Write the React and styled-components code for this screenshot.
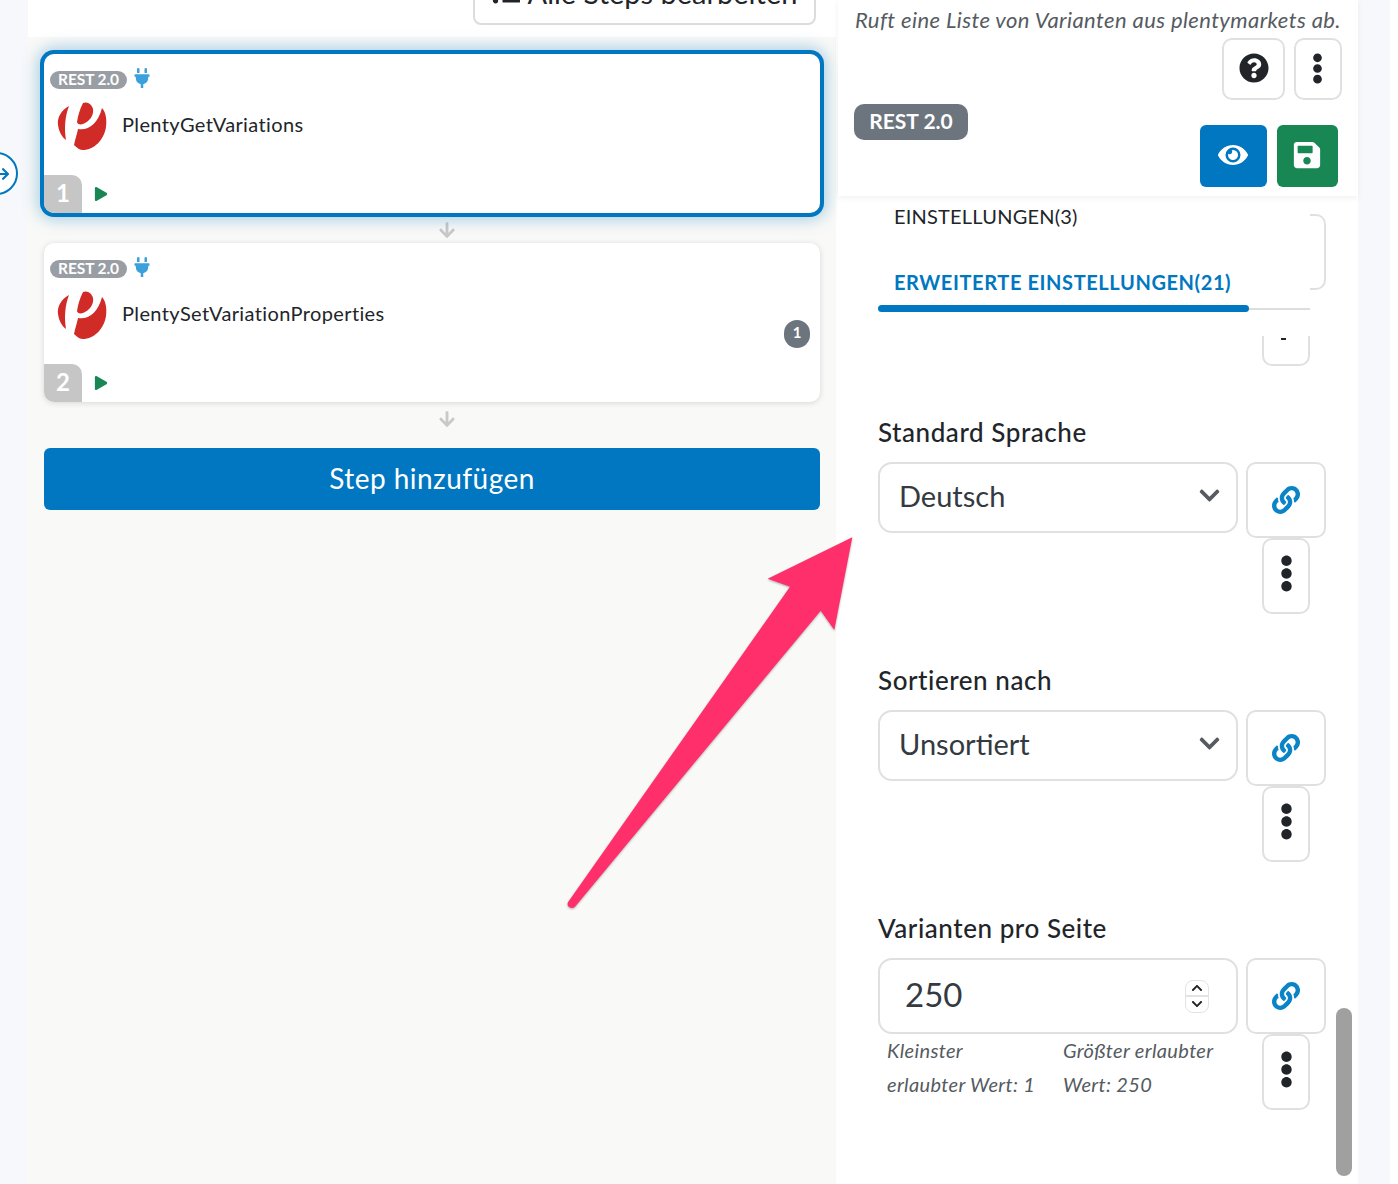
import React from "react";
import styled, { createGlobalStyle } from "styled-components";
import {
  FaArrowDown,
  FaArrowRight,
  FaChevronDown,
  FaChevronUp,
  FaEllipsisV,
  FaEye,
  FaLink,
  FaPlay,
  FaPlug,
  FaQuestionCircle,
  FaSave,
  FaTasks,
} from "react-icons/fa";

const GlobalStyle = createGlobalStyle`
  html, body {
    margin: 0;
    padding: 0;
    background: #fff;
  }
  * {
    box-sizing: border-box;
  }
`;

const Page = styled.div`
  position: relative;
  display: grid;
  grid-template-columns: 28px 810px 520px 32px 8px;
  width: 1398px;
  height: 1184px;
  overflow: hidden;
  font-family: "Lato", "Open Sans", sans-serif;
  color: #212529;
  background: #fff;
`;

const Strip = styled.div`
  background: #f6f8fb;
`;

const ToggleCircle = styled.div`
  position: absolute;
  left: -25px;
  top: 152px;
  width: 43px;
  height: 43px;
  display: flex;
  align-items: center;
  justify-content: center;
  border: 2px solid #0077c0;
  border-radius: 50%;
  background: #fff;
  color: #0077c0;
  font-size: 14px;
  padding-left: 12px;
`;

const LeftPanel = styled.main`
  background: #f9f9f7;
  border-right: 2px solid #fff;
`;

const TopBar = styled.div`
  height: 37px;
  overflow: hidden;
  background: #fff;
  display: flex;
  justify-content: flex-end;
  align-items: flex-end;
  padding: 0 20px 12px 0;
`;

const EditAllButton = styled.div`
  flex: none;
  width: 343px;
  height: 50px;
  border: 2px solid #dcdcdc;
  border-radius: 8px;
  background: #fff;
  display: flex;
  align-items: center;
  justify-content: center;
  gap: 8px;
  padding-bottom: 16px;
  font-size: 29px;
  color: #212529;
  white-space: nowrap;
`;

const Flow = styled.div`
  padding: 17px 16px 0;
`;

const Card = styled.div`
  position: relative;
  height: 159px;
  background: #fff;
  border-radius: 10px;
  display: flex;
  flex-direction: column;
  box-shadow: ${(p) =>
    p.$selected
      ? "0 0 0 4px #0077c0, 0 0 16px 6px rgba(0, 119, 192, 0.35)"
      : "0 1px 6px rgba(0, 0, 0, 0.14)"};
`;

const CardTop = styled.div`
  display: flex;
  align-items: center;
  gap: 5px;
  height: 20px;
  margin: 14px 0 0 6px;
  color: #3ba0db;
  font-size: 20px;
`;

const SmallBadge = styled.span`
  display: inline-block;
  width: 77px;
  height: 18px;
  margin-top: 3px;
  border-radius: 9px;
  background: #999ea5;
  color: #fff;
  font-size: 15.5px;
  font-weight: 700;
  line-height: 17px;
  letter-spacing: -0.1px;
  text-align: center;
  white-space: nowrap;
`;

const CardBody = styled.div`
  display: flex;
  gap: 8px;
  margin: 10px 0 0 6px;
`;

const CardTitle = styled.div`
  margin-top: 12px;
  font-size: 20px;
  line-height: 28px;
  letter-spacing: 0.38px;
`;

const CardFoot = styled.div`
  margin-top: auto;
  display: flex;
  align-items: center;
  gap: 12px;
  color: #198754;
  font-size: 14px;
`;

const StepNumber = styled.div`
  width: 38px;
  height: 38px;
  display: flex;
  align-items: center;
  justify-content: center;
  padding-bottom: 3px;
  background: #c6c6c6;
  border-radius: 0 10px 0 10px;
  color: #fff;
  font-size: 24px;
  font-weight: 700;
`;

const PlayMark = styled.span`
  display: flex;
  margin-top: -1px;
`;

const CountBadge = styled.span`
  position: absolute;
  right: 10px;
  top: 77px;
  width: 26px;
  height: 28px;
  border-radius: 13px;
  background: #6c757d;
  color: #fff;
  font-size: 15px;
  font-weight: 700;
  line-height: 25px;
  text-align: center;
`;

const Connector = styled.div`
  height: ${(p) => p.$height}px;
  padding: 8px 0 0 394px;
  color: #c9c9c9;
  font-size: 18px;
  line-height: 18px;
`;

const AddStep = styled.div`
  height: 62px;
  border-radius: 6px;
  background: #0077c0;
  color: #fff;
  font-size: 28px;
  line-height: 60px;
  letter-spacing: 0.47px;
  text-align: center;
`;

const RightPanel = styled.aside`
  position: relative;
  background: #fff;
`;

const Header = styled.header`
  height: 196px;
  padding: 6px 20px 0 16px;
  box-shadow: 0 2px 6px rgba(0, 0, 0, 0.06);
`;

const Description = styled.div`
  font-size: 22px;
  font-style: italic;
  line-height: 28px;
  letter-spacing: 0.4px;
  color: #555b61;
  white-space: nowrap;
  padding-left: 1px;
`;

const HelpRow = styled.div`
  display: flex;
  justify-content: flex-end;
  gap: 9px;
  margin: 4px -4px 0 0;
`;

const OutlineButton = styled.div`
  flex: none;
  width: ${(p) => p.$w}px;
  height: ${(p) => p.$h}px;
  display: flex;
  align-items: center;
  justify-content: center;
  padding: 0 ${(p) => p.$nudge || 0}px ${(p) => p.$lift || 0}px 0;
  border: 2px solid #e0e0e0;
  border-radius: 10px;
  background: #fff;
  color: ${(p) => p.$color || "#212529"};
  font-size: ${(p) => p.$size || 28}px;
`;

const ActionRow = styled.div`
  display: flex;
  justify-content: space-between;
  align-items: flex-start;
  margin-top: 4px;
`;

const LargeBadge = styled.span`
  width: 114px;
  height: 36px;
  border-radius: 10px;
  background: #6c757d;
  color: #fff;
  font-size: 21px;
  font-weight: 700;
  line-height: 34px;
  text-align: center;
`;

const Actions = styled.div`
  display: flex;
  gap: 10px;
  margin-top: 21px;
`;

const ActionButton = styled.div`
  width: ${(p) => p.$w}px;
  height: 62px;
  display: flex;
  align-items: center;
  justify-content: center;
  padding: 0 2px 3px 0;
  border-radius: 6px;
  background: ${(p) => p.$bg};
  color: #fff;
  font-size: 30px;
`;

const Body = styled.div`
  padding-left: 40px;
`;

const TabsRow = styled.div`
  display: flex;
`;

const TabList = styled.div`
  width: 432px;
  padding-top: 8px;
`;

const Tab = styled.div`
  margin-top: ${(p) => p.$top}px;
  padding-left: 16px;
  font-size: 20px;
  line-height: 24px;
  letter-spacing: ${(p) => (p.$active ? "0.6px" : "0.2px")};
  font-weight: ${(p) => (p.$active ? 700 : 400)};
  color: ${(p) => (p.$active ? "#0077c0" : "#212529")};
  white-space: nowrap;
`;

const Track = styled.div`
  height: 7px;
  margin-top: 11px;
  background: linear-gradient(#dddddd, #dddddd) center / 100% 2px no-repeat;
`;

const Indicator = styled.div`
  width: 371px;
  height: 7px;
  border-radius: 4px;
  background: #0077c0;
`;

const Bracket = styled.div`
  width: 16px;
  height: 76px;
  margin-top: 18px;
  border: 2px solid #e0e0e0;
  border-left: 0;
  border-radius: 0 10px 10px 0;
`;

const ClippedButton = styled.div`
  width: 48px;
  height: 30px;
  margin: 24px 0 0 384px;
  border: 2px solid #e0e0e0;
  border-top: 0;
  border-radius: 0 0 10px 10px;
  display: flex;
  justify-content: center;
`;

const ClippedDot = styled.span`
  width: 5px;
  height: 2px;
  margin: 2px 6px 0 0;
  background: #212529;
`;

const Field = styled.section`
  margin-top: 49px;
`;

const FieldLabel = styled.div`
  font-size: 26px;
  font-weight: 500;
  line-height: 34px;
  letter-spacing: 0.55px;
  margin-bottom: 13px;
`;

const FieldRow = styled.div`
  display: flex;
  align-items: flex-start;
  gap: 8px;
`;

const Control = styled.div`
  width: 360px;
`;

const Box = styled.div`
  height: ${(p) => p.$h}px;
  display: flex;
  align-items: center;
  justify-content: space-between;
  padding: ${(p) => p.$pad};
  border: 2px solid #e0e0e0;
  border-radius: 14px;
  background: #fff;
  font-size: ${(p) => p.$size}px;
  color: #343a40;
`;

const Chevron = styled.span`
  display: flex;
  color: #555b61;
  font-size: 23px;
  stroke: currentColor;
  stroke-width: 36px;
`;

const Spinner = styled.div`
  width: 24px;
  height: 33px;
  margin-top: 4px;
  display: flex;
  flex-direction: column;
  border: 1px solid #e3e3e3;
  border-radius: 8px;
  font-size: 12px;
  color: #212529;
  stroke: currentColor;
  stroke-width: 30px;
`;

const SpinPart = styled.span`
  flex: 1;
  display: flex;
  align-items: center;
  justify-content: center;
  border-top: ${(p) => (p.$lower ? "2px solid #e3e3e3" : "0")};
`;

const Side = styled.div`
  width: 80px;
  display: flex;
  flex-direction: column;
  align-items: center;
`;

const Hints = styled.div`
  display: grid;
  grid-template-columns: 176px 176px;
  padding-left: 9px;
  margin-top: -1px;
`;

const Hint = styled.div`
  font-size: 20px;
  font-style: italic;
  line-height: 34px;
  letter-spacing: 0.35px;
  color: #555b61;
  white-space: nowrap;
`;

const Scrollbar = styled.div`
  position: absolute;
  right: 6px;
  top: 1008px;
  width: 16px;
  height: 168px;
  border-radius: 8px;
  background: #a0a0a0;
`;

const PinkArrow = styled.svg`
  position: absolute;
  left: 560px;
  top: 530px;
  overflow: visible;
  filter: drop-shadow(0 1px 1px rgba(0, 0, 0, 0.3));
`;

const PlentyLogo = () => (
  <svg width="64" height="58" viewBox="0 0 64 58" style={{ flex: "none" }}>
    <g fill="#d12b27">
      <path d="M19 8C11 12 7 20 8 27C9 34 12 39 16 42C14 31 15 18 19 8Z" />
      <path d="M33 5C38 3 42 7 43 11C44 17 40 23 33 26C30 27 27 26 27 24C28 17 30 11 33 5Z" />
      <path d="M28 31C38 33 48 26 52 10C56 14 57 22 56 29C54 42 44 52 33 52C30 52 27 50 24 47C25 42 27 36 28 31Z" />
    </g>
  </svg>
);

const Step = ({ number, title, count, selected }) => (
  <Card $selected={selected}>
    <CardTop>
      <SmallBadge>REST 2.0</SmallBadge>
      <FaPlug />
    </CardTop>
    <CardBody>
      <PlentyLogo />
      <CardTitle>{title}</CardTitle>
    </CardBody>
    <CardFoot>
      <StepNumber>{number}</StepNumber>
      <PlayMark>
        <FaPlay />
      </PlayMark>
    </CardFoot>
    {count && <CountBadge>{count}</CountBadge>}
  </Card>
);

const SideButtons = () => (
  <Side>
    <OutlineButton $w={80} $h={76} $color="#0a84c6" $size={28}>
      <FaLink />
    </OutlineButton>
    <OutlineButton $w={48} $h={76} $size={37} $lift={6}>
      <FaEllipsisV />
    </OutlineButton>
  </Side>
);

const SelectField = ({ label, value }) => (
  <Field>
    <FieldLabel>{label}</FieldLabel>
    <FieldRow>
      <Control>
        <Box $h={71} $pad="0 15px 4px 19px" $size={29}>
          {value}
          <Chevron>
            <FaChevronDown />
          </Chevron>
        </Box>
      </Control>
      <SideButtons />
    </FieldRow>
  </Field>
);

export default function App() {
  return (
    <>
      <GlobalStyle />
      <Page>
        <Strip />
        <LeftPanel>
          <TopBar>
            <EditAllButton>
              <FaTasks size={28} />
              Alle Steps bearbeiten
            </EditAllButton>
          </TopBar>
          <Flow>
            <Step number="1" title="PlentyGetVariations" selected />
            <Connector $height={30}>
              <FaArrowDown />
            </Connector>
            <Step number="2" title="PlentySetVariationProperties" count="1" />
            <Connector $height={46}>
              <FaArrowDown />
            </Connector>
            <AddStep>Step hinzufügen</AddStep>
          </Flow>
        </LeftPanel>
        <RightPanel>
          <Header>
            <Description>Ruft eine Liste von Varianten aus plentymarkets ab.</Description>
            <HelpRow>
              <OutlineButton $w={63} $h={62} $size={30} $lift={3}>
                <FaQuestionCircle />
              </OutlineButton>
              <OutlineButton $w={48} $h={62} $size={31} $lift={1} $nudge={2}>
                <FaEllipsisV />
              </OutlineButton>
            </HelpRow>
            <ActionRow>
              <LargeBadge>REST 2.0</LargeBadge>
              <Actions>
                <ActionButton $w={67} $bg="#0077c0">
                  <FaEye />
                </ActionButton>
                <ActionButton $w={61} $bg="#198754">
                  <FaSave />
                </ActionButton>
              </Actions>
            </ActionRow>
          </Header>
          <Body>
            <TabsRow>
              <TabList>
                <Tab $top={0}>EINSTELLUNGEN(3)</Tab>
                <Tab $top={42} $active>
                  ERWEITERTE EINSTELLUNGEN(21)
                </Tab>
                <Track>
                  <Indicator />
                </Track>
              </TabList>
              <Bracket />
            </TabsRow>
            <ClippedButton>
              <ClippedDot />
            </ClippedButton>
            <SelectField label="Standard Sprache" value="Deutsch" />
            <SelectField label="Sortieren nach" value="Unsortiert" />
            <Field>
              <FieldLabel>Varianten pro Seite</FieldLabel>
              <FieldRow>
                <Control>
                  <Box $h={76} $pad="0 27px 4px 25px" $size={33}>
                    250
                    <Spinner>
                      <SpinPart>
                        <FaChevronUp />
                      </SpinPart>
                      <SpinPart $lower>
                        <FaChevronDown />
                      </SpinPart>
                    </Spinner>
                  </Box>
                  <Hints>
                    <Hint>
                      Kleinster
                      <br />
                      erlaubter Wert: 1
                    </Hint>
                    <Hint>
                      Größter erlaubter
                      <br />
                      Wert: 250
                    </Hint>
                  </Hints>
                </Control>
                <SideButtons />
              </FieldRow>
            </Field>
          </Body>
          <Scrollbar />
        </RightPanel>
        <Strip />
        <div />
        <ToggleCircle>
          <FaArrowRight />
        </ToggleCircle>
        <PinkArrow width="300" height="385" viewBox="0 0 300 385">
          <path
            d="M292.3 7.3L207.7 48.7L230 56.7L8.3 371.7Q6.5 375 9 377Q12.5 379 15 376.7L260.7 80.7L274.3 100Z"
            fill="#ff2f6b"
          />
        </PinkArrow>
      </Page>
    </>
  );
}
